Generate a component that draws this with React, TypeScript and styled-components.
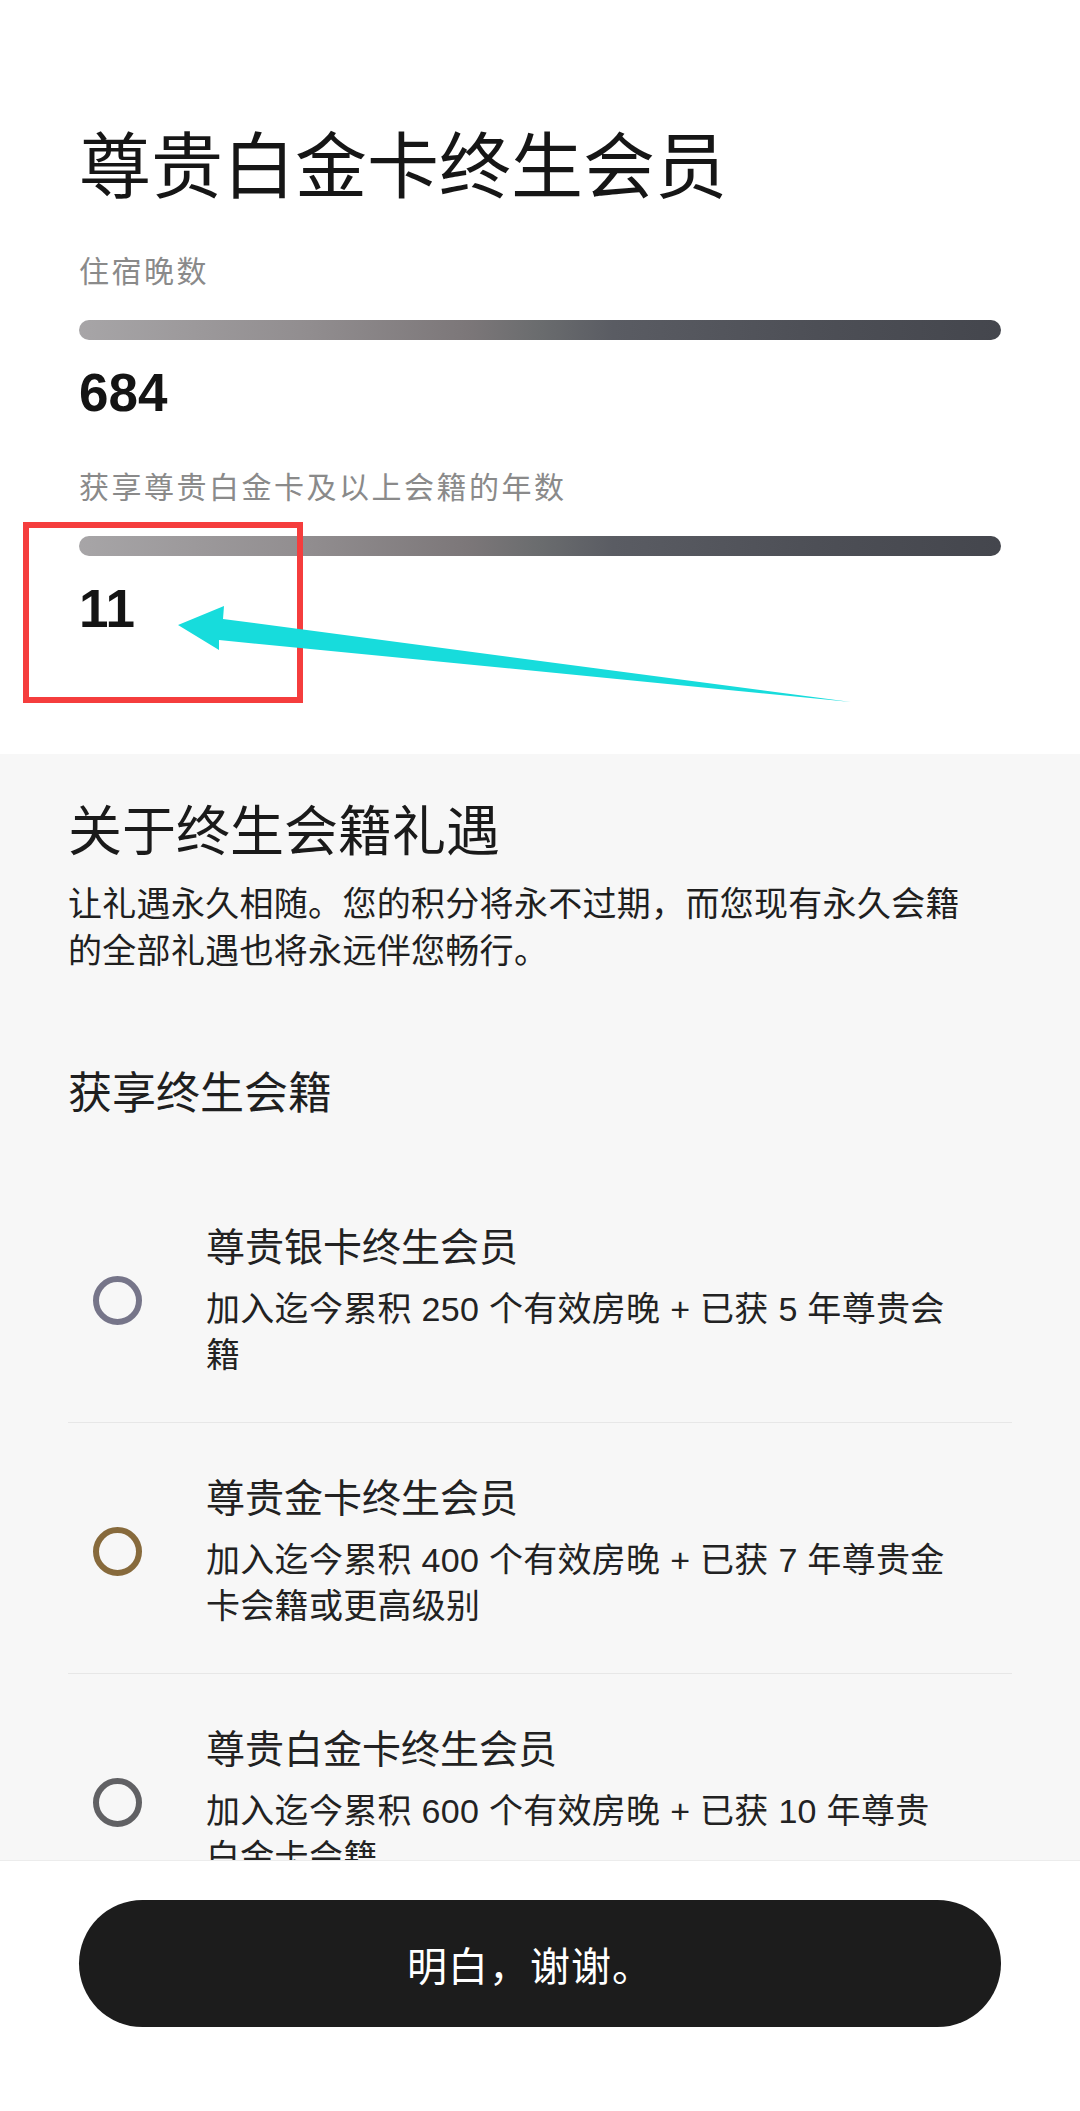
import React from "react";
import styled, { createGlobalStyle } from "styled-components";

const GlobalStyle = createGlobalStyle`
  html, body {
    margin: 0;
    padding: 0;
    background: #ffffff;
  }
  body {
    font-family: "Liberation Sans", "Noto Sans CJK SC", sans-serif;
    color: #1c1c1c;
  }
  * { box-sizing: border-box; }
`;

const Screen = styled.div`
  position: relative;
  width: 1080px;
  height: 100vh;
  display: flex;
  flex-direction: column;
  overflow: hidden;
  background: #ffffff;
`;

const Scroll = styled.main`
  flex: 1;
  min-height: 0;
  overflow: hidden;
  display: flex;
  flex-direction: column;
`;

const Summary = styled.section`
  position: relative;
  background: #ffffff;
  padding: 124px 79px 119px;
  display: flex;
  flex-direction: column;
`;

const TierTitle = styled.h1`
  margin: 0 0 41px;
  font-size: 72px;
  line-height: 86px;
  font-weight: 400;
  color: #161616;
`;

const Stat = styled.div`
  display: flex;
  flex-direction: column;
  & + & {
    margin-top: 48px;
  }
`;

const StatLabel = styled.div`
  font-size: 30px;
  line-height: 42px;
  letter-spacing: 2.5px;
  color: #8a8a8a;
`;

const Bar = styled.div`
  margin-top: 27px;
  height: 20px;
  border-radius: 10px;
  background: linear-gradient(
    90deg,
    #a7a5a7 0%,
    #918d8f 25%,
    #7c7779 42%,
    #6a6c6e 50%,
    #5a5c63 58%,
    #4d4f56 80%,
    #44464d 100%
  );
`;

const StatValue = styled.div`
  margin-top: 26px;
  font-size: 53px;
  line-height: 53px;
  font-weight: 700;
  color: #141414;
`;

const Annotation = styled.div`
  position: absolute;
  left: 23px;
  top: 522px;
  width: 280px;
  height: 181px;
  border: 6px solid #f53d3d;
  pointer-events: none;
`;

const ArrowLayer = styled.svg`
  position: absolute;
  left: 0;
  top: 0;
  width: 1080px;
  height: 760px;
  pointer-events: none;
`;

const Benefits = styled.section`
  flex: 1;
  background: #f7f7f7;
  padding: 45px 68px 0;
  display: flex;
  flex-direction: column;
`;

const Heading = styled.h2`
  margin: 0;
  font-size: 54px;
  line-height: 67px;
  font-weight: 400;
  color: #1a1a1a;
`;

const Paragraph = styled.p`
  margin: 15px 0 0;
  padding-right: 47px;
  font-size: 34px;
  line-height: 47px;
  letter-spacing: 0.3px;
  color: #1f1f1f;
`;

const SubHeading = styled.h3`
  margin: 90px 0 0;
  font-size: 44px;
  line-height: 57px;
  font-weight: 400;
  color: #1f1f1f;
`;

const TierList = styled.ul`
  list-style: none;
  margin: 50px 0 0;
  padding: 0;
`;

const TierItem = styled.li`
  display: flex;
  align-items: center;
  padding: 50px 57px 44px 25px;
  border-bottom: 1px solid #e7e7e7;
`;

const Ring = styled.span<{ $color: string }>`
  flex: none;
  width: 49px;
  height: 49px;
  border-radius: 50%;
  border: 6.5px solid ${(p) => p.$color};
  margin-right: 64px;
`;

const TierText = styled.div`
  flex: 1;
  min-width: 0;
  display: flex;
  flex-direction: column;
`;

const TierName = styled.div`
  font-size: 39px;
  line-height: 52px;
  color: #222222;
`;

const TierDesc = styled.div`
  margin-top: 12px;
  font-size: 34px;
  line-height: 46px;
  letter-spacing: 0.3px;
  color: #222222;
`;

const Footer = styled.footer`
  flex: none;
  height: 251px;
  background: #ffffff;
  border-top: 1px solid #ececec;
  padding: 39px 79px 0;
`;

const PrimaryButton = styled.button`
  width: 100%;
  height: 127px;
  border: none;
  border-radius: 64px;
  background: #1c1c1c;
  color: #ffffff;
  padding: 0 20px 0 0;
  font-family: "Liberation Sans", "Noto Sans CJK SC", sans-serif;
  font-size: 40px;
  letter-spacing: 1px;
  cursor: pointer;
`;

const tiers = [
  {
    name: "尊贵银卡终生会员",
    desc: "加入迄今累积 250 个有效房晚 + 已获 5 年尊贵会籍",
    color: "#767589",
  },
  {
    name: "尊贵金卡终生会员",
    desc: "加入迄今累积 400 个有效房晚 + 已获 7 年尊贵金卡会籍或更高级别",
    color: "#876a3c",
  },
  {
    name: "尊贵白金卡终生会员",
    desc: "加入迄今累积 600 个有效房晚 + 已获 10 年尊贵白金卡会籍",
    color: "#616164",
  },
];

export default function App() {
  return (
    <>
      <GlobalStyle />
      <Screen>
        <Scroll>
          <Summary>
            <TierTitle>尊贵白金卡终生会员</TierTitle>
            <Stat>
              <StatLabel>住宿晚数</StatLabel>
              <Bar />
              <StatValue>684</StatValue>
            </Stat>
            <Stat>
              <StatLabel>获享尊贵白金卡及以上会籍的年数</StatLabel>
              <Bar />
              <StatValue>11</StatValue>
            </Stat>
            <Annotation />
            <ArrowLayer viewBox="0 0 1080 760">
              <polygon
                points="178,625 224,606 223,619 851,702 219,640 219,650"
                fill="#17dcdc"
              />
            </ArrowLayer>
          </Summary>
          <Benefits>
            <Heading>关于终生会籍礼遇</Heading>
            <Paragraph>
              让礼遇永久相随。您的积分将永不过期，而您现有永久会籍的全部礼遇也将永远伴您畅行。
            </Paragraph>
            <SubHeading>获享终生会籍</SubHeading>
            <TierList>
              {tiers.map((t) => (
                <TierItem key={t.name}>
                  <Ring $color={t.color} />
                  <TierText>
                    <TierName>{t.name}</TierName>
                    <TierDesc>{t.desc}</TierDesc>
                  </TierText>
                </TierItem>
              ))}
            </TierList>
          </Benefits>
        </Scroll>
        <Footer>
          <PrimaryButton>明白，谢谢。</PrimaryButton>
        </Footer>
      </Screen>
    </>
  );
}
